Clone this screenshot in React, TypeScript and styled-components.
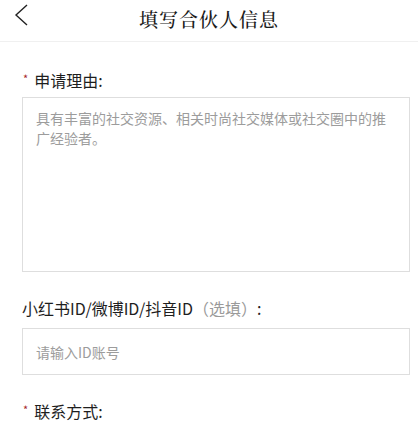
import styled, { createGlobalStyle } from "styled-components";

const GlobalStyle = createGlobalStyle`
  body {
    margin: 0;
    background: #fff;
    font-family: "Noto Sans CJK SC", "Liberation Sans", sans-serif;
    color: #222;
  }
`;

const App: React.FC = () => {
  return (
    <Page>
      <GlobalStyle />
      <Header>
        <BackButton aria-label="back">
          <svg width="14" height="22" viewBox="0 0 14 22">
            <path d="M13 1 L2 11 L13 21" fill="none" stroke="#222" strokeWidth="1.4" />
          </svg>
        </BackButton>
        <Title>填写合伙人信息</Title>
      </Header>
      <Form>
        <Field $gap={7}>
          <Label>
            <Star>*</Star>申请理由:
          </Label>
          <TextArea placeholder="具有丰富的社交资源、相关时尚社交媒体或社交圈中的推广经验者。" />
        </Field>
        <Field $gap={10}>
          <Label>
            小红书ID/微博ID/抖音ID<Hint>（选填）</Hint>:
          </Label>
          <Input placeholder="请输入ID账号" />
        </Field>
        <Field $gap={10}>
          <Label>
            <Star>*</Star>联系方式:
          </Label>
        </Field>
      </Form>
    </Page>
  );
};

export default App;

const Page = styled.div`
  width: 418px;
  min-height: 424px;
  background: #fff;
`;

const Header = styled.header`
  position: relative;
  height: 41px;
  display: flex;
  align-items: center;
  justify-content: center;
  border-bottom: 1px solid #f0f0f0;
`;

const BackButton = styled.button`
  position: absolute;
  left: 14px;
  top: 4px;
  padding: 0;
  border: none;
  background: none;
  display: flex;
`;

const Title = styled.h1`
  margin: 0;
  font-family: "Noto Serif CJK SC", "Noto Sans CJK SC", serif;
  font-size: 19px;
  font-weight: 500;
  letter-spacing: 1px;
  color: #1a1a1a;
  line-height: 1;
  margin-top: -4px;
`;

const Form = styled.div`
  padding: 28px 8px 0 22px;
  display: flex;
  flex-direction: column;
  gap: 26px;
`;

const Field = styled.div<{ $gap: number }>`
  display: flex;
  flex-direction: column;
  gap: ${({ $gap }) => $gap}px;
`;

const Label = styled.div`
  font-size: 16px;
  line-height: 20px;
  height: 20px;
  color: #1e1e1e;
`;

const Star = styled.span`
  color: #a5262a;
  font-size: 11px;
  vertical-align: top;
  margin-right: 6px;
  margin-left: 1px;
  position: relative;
  top: -2px;
`;

const Hint = styled.span`
  color: #9a9a9a;
`;

const boxStyles = `
  box-sizing: border-box;
  display: block;
  width: 388px;
  margin: 0;
  border: 1px solid #dedede;
  border-radius: 0;
  padding: 10px 13px;
  font-family: "Noto Sans CJK SC", "Liberation Sans", sans-serif;
  font-size: 14px;
  color: #333;
  outline: none;
  &::placeholder {
    color: #9c9c9c;
  }
`;

const TextArea = styled.textarea`
  ${boxStyles}
  height: 175px;
  line-height: 20px;
  resize: none;
`;

const Input = styled.input`
  ${boxStyles}
  height: 47px;
`;
